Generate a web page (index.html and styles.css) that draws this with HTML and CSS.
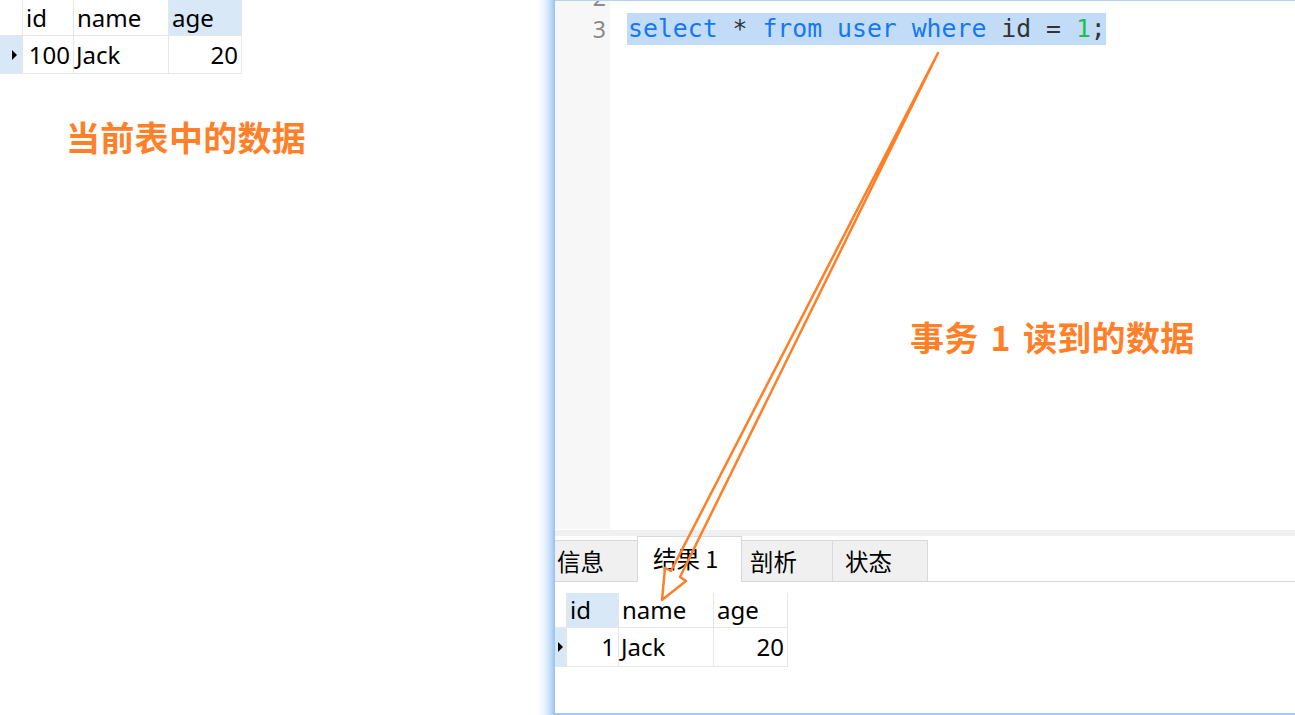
FILE: index.html
```html
<!DOCTYPE html>
<html lang="zh-CN">
<head>
<meta charset="utf-8">
<title>事务读取示例</title>
<link rel="stylesheet" href="styles.css">
</head>
<body>
<div class="screen">
  <div class="left">
    <div class="grid grid-top">
      <div class="cell"></div>
      <div class="cell">id</div>
      <div class="cell">name</div>
      <div class="cell hl">age</div>
      <div class="cell hl ind-top"><span class="tri"></span></div>
      <div class="cell r">100</div>
      <div class="cell jack">Jack</div>
      <div class="cell r">20</div>
    </div>
    <div class="note note-left">当前表中的数据</div>
  </div>
  <div class="edge"></div>
  <div class="panel">
    <div class="editor">
      <div class="gutter">
        <div class="ln">1</div>
        <div class="ln">2</div>
        <div class="ln">3</div>
      </div>
      <div class="code">
        <div class="line"></div>
        <div class="line"></div>
        <div class="line"><span class="selection"><span class="kw">select</span> * <span class="kw">from</span> <span class="kw">user</span> <span class="kw">where</span> id = <span class="num">1</span>;</span></div>
      </div>
      <div class="note note-right">事务 1 读到的数据</div>
    </div>
    <div class="band"></div>
    <div class="tabs">
      <div class="tab tab-info">信息</div>
      <div class="tab tab-result active">结果 1</div>
      <div class="tab tab-profile">剖析</div>
      <div class="tab tab-status">状态</div>
    </div>
    <div class="results">
      <div class="grid grid-bottom">
        <div class="cell"></div>
        <div class="cell hl">id</div>
        <div class="cell">name</div>
        <div class="cell">age</div>
        <div class="cell hl ind-bottom"><span class="tri"></span></div>
        <div class="cell r">1</div>
        <div class="cell jack">Jack</div>
        <div class="cell r">20</div>
      </div>
    </div>
  </div>
  <svg class="arrow" width="1295" height="715" viewBox="0 0 1295 715">
    <polygon points="938,53 680,577 686,581 662,600 665,568 671,571" fill="none" stroke="#ff7f27" stroke-width="2.5" stroke-linejoin="round"/>
  </svg>
</div>
</body>
</html>
```
FILE: styles.css
```css
* { box-sizing: border-box; margin: 0; padding: 0; }
html, body { width: 1295px; height: 715px; overflow: hidden; background: #fff; }
body { font-family: "Noto Sans", "Noto Sans CJK SC", sans-serif; color: #000; }

.screen { position: relative; display: flex; width: 1295px; height: 715px; }

.left { width: 538px; flex: none; }

.grid {
  display: grid;
  gap: 1px;
  background: #e6e6e6;
  width: max-content;
  padding: 0 1px 1px 0;
  font-size: 24px;
}
.grid-top { grid-template-columns: 22px 50px 94px 72px; grid-template-rows: 35px 37px; }
.grid-bottom { grid-template-columns: 11px 51px 94px 73px; grid-template-rows: 34px 38px; }

.cell {
  background: #fff;
  display: flex;
  align-items: center;
  padding: 0 3px;
  white-space: nowrap;
  line-height: 1;
}
.cell.hl { background: #d9e8f7; }
.cell.r { justify-content: flex-end; }
.cell.jack { padding-left: 2px; }
.ind-top { padding-left: 12px; }
.ind-bottom { padding-left: 3px; }
.tri {
  width: 0; height: 0;
  border-left: 5px solid #000;
  border-top: 5px solid transparent;
  border-bottom: 5px solid transparent;
}

.note {
  font-family: "Noto Sans CJK SC", sans-serif;
  font-weight: 700;
  font-size: 34px;
  line-height: 40px;
  color: #ff8029;
  white-space: nowrap;
}
.note-left { margin: 43px 0 0 66px; letter-spacing: 0.3px; }
.note-right { position: absolute; left: 355px; top: 316px; word-spacing: 4px; letter-spacing: 0.3px; }

.edge {
  width: 17px;
  flex: none;
  background: linear-gradient(to right, rgba(255,255,255,0) 0%, #e3effc 45%, #b9d7f7 80%, #94c1f1 100%);
}

.panel {
  flex: 1;
  display: flex;
  flex-direction: column;
  border-top: 1px solid #b2d3f6;
  border-bottom: 2px solid #a2caf4;
}

.editor {
  position: relative;
  height: 528px;
  display: flex;
  overflow: hidden;
  flex: none;
}
.gutter {
  width: 55px;
  flex: none;
  background: #f7f7f7;
  margin-top: -52px;
  padding-bottom: 600px;
}
.ln {
  height: 32px;
  line-height: 32px;
  text-align: right;
  padding-right: 4px;
  font-size: 23px;
  color: #8a8a8a;
}
.code {
  margin-top: -52px;
  padding-left: 17px;
  font-family: "DejaVu Sans Mono", monospace;
  font-size: 24.8px;
  color: #333;
}
.line { height: 32px; line-height: 32px; white-space: pre; }
.selection { display: inline-block; background: #c2dcf7; height: 32px; padding-left: 1px; }
.kw { color: #1677f2; }
.num { color: #1fbf4f; }

.band { height: 6px; margin-top: 1px; background: #f0f0f0; flex: none; }

.tabs {
  height: 46px;
  flex: none;
  display: flex;
  align-items: flex-end;
  border-bottom: 1px solid #d7d7d7;
  font-family: "Noto Sans CJK SC", sans-serif;
  font-size: 23.5px;
}
.tab {
  height: 41px;
  line-height: 40px;
  background: #f0f0f0;
  border: 1px solid #d9d9d9;
  border-bottom: none;
  border-left: none;
  white-space: nowrap;
}
.tab.active {
  height: 46px;
  line-height: 42px;
  background: #fff;
  margin-bottom: -1px;
  border-left: 1px solid #d9d9d9;
  margin-left: -1px;
}
.tab-info { width: 83px; padding-left: 2px; }
.tab-result { width: 105px; padding-left: 15px; }
.tab-profile { width: 91px; padding-left: 8px; }
.tab-status { width: 95px; padding-left: 12px; }

.results { flex: 1; background: #fff; padding-top: 11px; }

.arrow { position: absolute; left: 0; top: 0; pointer-events: none; }
```
